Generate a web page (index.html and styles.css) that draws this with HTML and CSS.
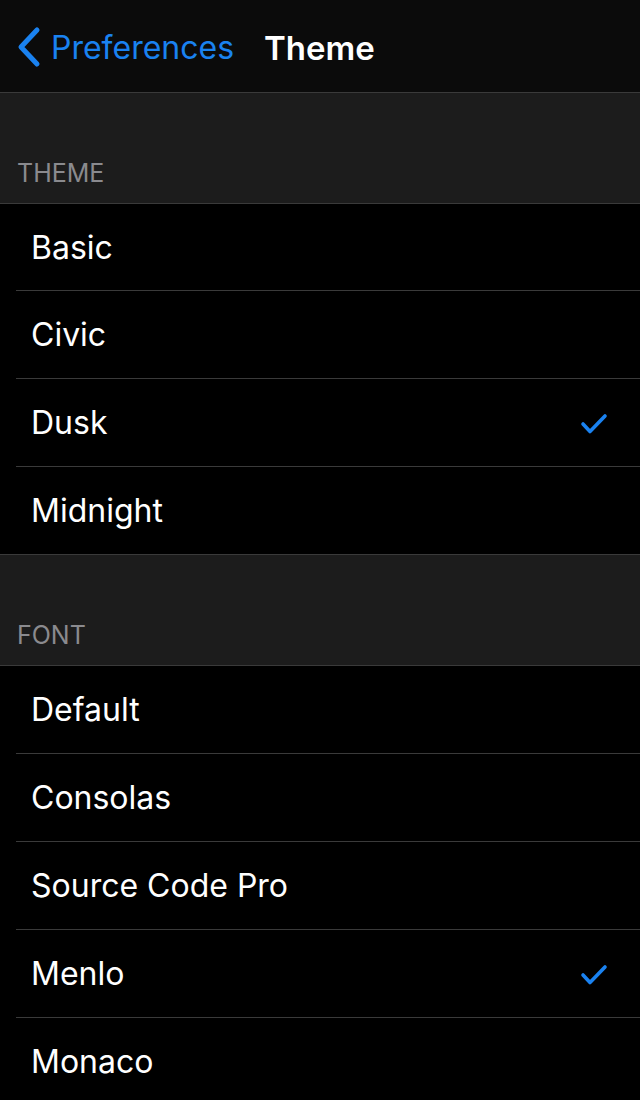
FILE: index.html
```html
<!DOCTYPE html>
<html lang="en">
<head>
  <meta charset="UTF-8" />
  <meta name="viewport" content="width=device-width, initial-scale=1.0"/>
  <title>Theme</title>
  <link rel="stylesheet" href="styles.css">
</head>
<body>
  <header class="navbar">
    <a class="back" href="#">
      <svg class="chevron" width="26" height="42" viewBox="0 0 26 42"><path d="M21 4 L5 21 L21 38" fill="none" stroke="#1a82f0" stroke-width="5" stroke-linecap="round" stroke-linejoin="round"/></svg>
      <span>Preferences</span>
    </a>
    <h1>Theme</h1>
  </header>

  <div class="section-header">THEME</div>
  <ul class="list list-first">
    <li>Basic</li>
    <li>Civic</li>
    <li>Dusk <svg class="check" width="28" height="22" viewBox="0 0 28 22"><path d="M3 11 L10 18.5 L25 3" fill="none" stroke="#1a82f0" stroke-width="3.6" stroke-linecap="round" stroke-linejoin="round"/></svg></li>
    <li>Midnight</li>
  </ul>

  <div class="section-header">FONT</div>
  <ul class="list">
    <li>Default</li>
    <li>Consolas</li>
    <li>Source Code Pro</li>
    <li>Menlo <svg class="check" width="28" height="22" viewBox="0 0 28 22"><path d="M3 11 L10 18.5 L25 3" fill="none" stroke="#1a82f0" stroke-width="3.6" stroke-linecap="round" stroke-linejoin="round"/></svg></li>
    <li>Monaco</li>
  </ul>
</body>
</html>
```

FILE: styles.css
```css
body { margin: 0; background: #000; color: #fff; font-family: Inter, "Noto Sans", sans-serif; }
.navbar { height: 93px; box-sizing: border-box; padding: 3px 0 0 16px; background: #0b0b0b; border-bottom: 1px solid #3a3a3a; display: flex; align-items: center; gap: 30px; }
.back { display: flex; align-items: center; gap: 9px; color: #1a82f0; text-decoration: none; font-size: 32px; }
.chevron { display: block; margin-top: -2px; }
.navbar h1 { margin: 0; font-size: 33px; font-weight: 600; }
.section-header { background: #1c1c1c; height: 111px; box-sizing: border-box; padding: 0 17px 15px; display: flex; align-items: flex-end; color: #8a8a8e; font-size: 25px; border-bottom: 1px solid #3a3a3a; }
.list { list-style: none; margin: 0; padding: 0 0 0 16px; border-bottom: 1px solid #3a3a3a; }
.list li { height: 87px; display: flex; align-items: center; justify-content: space-between; padding-left: 15px; padding-right: 32px; font-size: 32px; border-bottom: 1px solid #3a3a3a; }
.list-first li:first-child { height: 86px; }
.list li:last-child { border-bottom: none; }
.check { display: block; margin-top: 2px; }
```
